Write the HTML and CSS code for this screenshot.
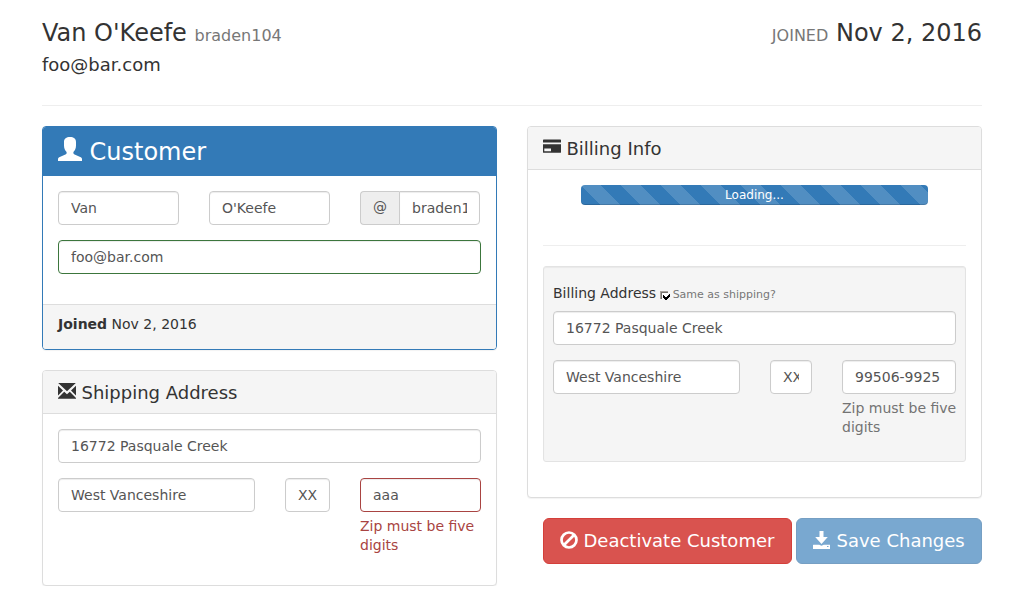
FILE: index.html
```html
<!DOCTYPE html>
<html lang="en">
<head>
<meta charset="utf-8">
<title>Customer</title>
<link rel="stylesheet" href="styles.css">
</head>
<body>
<main class="container">
  <header class="page-head">
    <div>
      <h3 class="name">Van O'Keefe <small>braden104</small></h3>
      <h4 class="email">foo@bar.com</h4>
    </div>
    <h3 class="name"><small>JOINED</small> Nov 2, 2016</h3>
  </header>
  <div class="columns">
    <div class="column">
      <section class="panel panel-primary">
        <h3 class="panel-heading">
          <svg class="icon icon-user" viewBox="0 0 24 24"><path d="M12 0C8.300 0 6 1.800 6 5v3.500c0 3 1 5 2.600 6.500v1c0 .7-.5 1.200-1.200 1.600L1.200 20.300C.4 20.700 0 21.300 0 22v2h24v-2c0-.7-.4-1.300-1.200-1.700l-6.200-2.700c-.7-.4-1.200-.9-1.200-1.600v-1C17 13.500 18 11.500 18 8.500V5c0-3.200-2.300-5-6-5z"/></svg>
          <span>Customer</span>
        </h3>
        <div class="panel-body customer-body">
          <div class="row thirds">
            <input class="control" value="Van" aria-label="First name">
            <input class="control" value="O'Keefe" aria-label="Last name">
            <div class="input-group"><span class="addon">@</span><input class="control" value="braden104" aria-label="Username"></div>
          </div>
          <input class="control success" value="foo@bar.com" aria-label="Email">
        </div>
        <footer class="panel-footer"><strong>Joined</strong> Nov 2, 2016</footer>
      </section>
      <section class="panel shipping">
        <h4 class="panel-heading">
          <svg class="icon icon-mail" viewBox="0 0 18 16"><path d="M.2 0h17.600L9 8.200zM0 2.800l5 4.700L0 12.500zM18 2.800l-5 4.700 5 5zM0 15.700v-.8l6.200-6.200L9 11.300l2.800-2.600L18 14.900v.8z"/></svg>
          <span>Shipping Address</span>
        </h4>
        <div class="panel-body">
          <input class="control" value="16772 Pasquale Creek" aria-label="Street">
          <div class="row shipping-row">
            <input class="control" value="West Vanceshire" aria-label="City">
            <input class="control" value="XX" aria-label="State">
            <div class="field error"><input class="control" value="aaa" aria-label="Zip"><span class="help">Zip must be five digits</span></div>
          </div>
        </div>
      </section>
    </div>
    <div class="column">
      <section class="panel billing">
        <h4 class="panel-heading">
          <svg class="icon icon-card" viewBox="0 0 18 14"><path fill-rule="evenodd" d="M.7.4h16.600q.7 0 .7.700V3.500H0V1.100Q0 .4.700.4zM0 5.200h18v8q0 .6-.7.6H.7q-.7 0-.7-.6zM1.300 9.500v2.700H8V9.500z"/></svg>
          <span>Billing Info</span>
        </h4>
        <div class="panel-body">
          <div class="progress">Loading...</div>
          <hr>
          <div class="well">
            <div class="address-label">Billing Address
              <svg class="check" viewBox="0 0 11 10"><path fill="#fff" d="M1 1h7v7H1z"/><path fill="#aaa59f" d="M0 0h8v1H1v7H0z"/><path fill="#77736e" d="M1 1h7v1H2v6H1z"/><path fill="#000" d="M3 4h1v1h1v1h2V5h1V4h1V3h1v3H9v1H8v1H7v1H5V8H4V7H3z"/></svg>
              <small>Same as shipping?</small>
            </div>
            <input class="control" value="16772 Pasquale Creek" aria-label="Billing street">
            <div class="row billing-row">
              <input class="control" value="West Vanceshire" aria-label="Billing city">
              <input class="control" value="XX" aria-label="Billing state">
              <div class="field"><input class="control" value="99506-9925" aria-label="Billing zip"><span class="help">Zip must be five digits</span></div>
            </div>
          </div>
        </div>
      </section>
      <div class="actions">
        <button class="btn danger"><svg class="icon icon-ban" viewBox="0 0 18 18"><g fill="none" stroke="currentColor" stroke-width="2.700"><circle cx="9" cy="9" r="7.500"/><path d="M3.700 14.300 14.300 3.700"/></g></svg><span>Deactivate Customer</span></button>
        <button class="btn primary" disabled><svg class="icon icon-save" viewBox="0 0 18 18"><path fill-rule="evenodd" d="M6.500 0h4v6h4.300L8.500 13 2.200 6h4.300zM.5 13.700h5.800l2.200 1 2.200-1H17V18H0v-4zM14 15v1h1.500v-1z"/></svg><span>Save Changes</span></button>
      </div>
    </div>
  </div>
</main>
</body>
</html>
```
FILE: styles.css
```css
* { box-sizing: border-box; }
body { margin: 0; background: #fff; color: #333; font: 14px/20px "DejaVu Sans", sans-serif; }
h3, h4 { margin: 0; font-weight: 400; }
.container { width: 940px; margin: 0 auto; }
.page-head { display: flex; justify-content: space-between; height: 106px; padding-top: 20px; border-bottom: 1px solid #eee; }
.name { font-size: 24px; line-height: 26px; }
.name small { font-size: 16px; color: #777; }
.email { margin-top: 6px; font-size: 18px; line-height: 20px; }
.columns { display: grid; grid-template-columns: 455px 455px; gap: 30px; margin-top: 20px; }
.panel { border: 1px solid #ddd; border-radius: 4px; background: #fff; box-shadow: 0 1px 1px rgba(0, 0, 0, .05); overflow: hidden; }
.panel-heading { display: flex; align-items: center; height: 43px; padding: 0 15px; background: #f5f5f5; border-bottom: 1px solid #ddd; font-size: 18px; line-height: 20px; }
.panel-heading span { padding-top: 2px; }
.panel-primary { height: 224px; border-color: #337ab7; }
.panel-primary .panel-heading { height: 49px; background: #337ab7; border-color: #337ab7; color: #fff; font-size: 24px; }
.panel-body { padding: 15px; }
.customer-body { height: 128px; }
.panel-footer { height: 45px; padding: 9px 15px; background: #f5f5f5; border-top: 1px solid #ddd; }
.shipping { height: 216px; margin-top: 20px; }
.billing { height: 372px; }
.icon { flex: none; fill: currentColor; }
.icon-user { width: 24px; height: 24px; margin: 0 7.500px 4px 0; }
.icon-mail { width: 18px; height: 16px; margin: 0 5.500px 2px 0; }
.icon-card { width: 18px; height: 14px; margin: 0 5.500px 4px 0; }
.row { display: grid; column-gap: 30px; }
.thirds { grid-template-columns: 121px 121px 120px; margin-bottom: 15px; }
.shipping-row { grid-template-columns: 197px 45px 121px; margin-top: 15px; }
.billing-row { grid-template-columns: 187px 42px 114px; margin-top: 15px; }
.control { display: block; width: 100%; min-width: 0; height: 34px; padding: 6px 12px; border: 1px solid #ccc; border-radius: 4px; background: #fff; box-shadow: inset 0 1px 1px rgba(0, 0, 0, .075); color: #555; font: inherit; }
.success { border-color: #3c763d; }
.error .control { border-color: #a94442; }
.input-group { display: flex; }
.addon { flex: none; width: 39px; height: 34px; border: 1px solid #ccc; border-right: 0; border-radius: 4px 0 0 4px; background: #eee; color: #555; line-height: 31px; text-align: center; }
.input-group .control { border-radius: 0 4px 4px 0; }
.help { display: block; margin: 5px -4px 0 0; color: #737373; line-height: 19px; }
.error .help { color: #a94442; }
.progress { width: 347px; height: 20px; margin: 0 auto; border-radius: 4px; background: #337ab7 linear-gradient(45deg, rgba(255,255,255,.15) 25%, transparent 25%, transparent 50%, rgba(255,255,255,.15) 50%, rgba(255,255,255,.15) 75%, transparent 75%) 0 0 / 40px 40px; box-shadow: inset 0 -1px 0 rgba(0, 0, 0, .15); color: #fff; font-size: 12px; line-height: 20px; text-align: center; }
hr { height: 1px; margin: 40px 0 20px; border: 0; background: #eee; }
.well { height: 196px; padding: 16px 9px 0; border: 1px solid #e3e3e3; border-radius: 3px; background: #f5f5f5; box-shadow: inset 0 1px 1px rgba(0, 0, 0, .05); }
.address-label { display: flex; height: 28px; line-height: 20px; }
.address-label small { margin-left: 2px; color: #777; font-size: 11px; line-height: 24px; }
.check { width: 11px; height: 10px; margin: 8px 0 0 3.500px; }
.actions { display: flex; justify-content: flex-end; gap: 4px; margin-top: 20px; }
.btn { display: flex; align-items: center; height: 46px; padding: 0 16px; border: 1px solid; border-radius: 6px; color: #fff; font: 18px/24px "DejaVu Sans", sans-serif; white-space: nowrap; }
.danger { width: 249px; background: #d9534f; border-color: #d43f3a; }
.primary { width: 186px; background: #337ab7; border-color: #2e6da4; opacity: .65; }
.icon-ban, .icon-save { width: 18px; height: 18px; margin: 0 5.500px 3px 0; }
```
